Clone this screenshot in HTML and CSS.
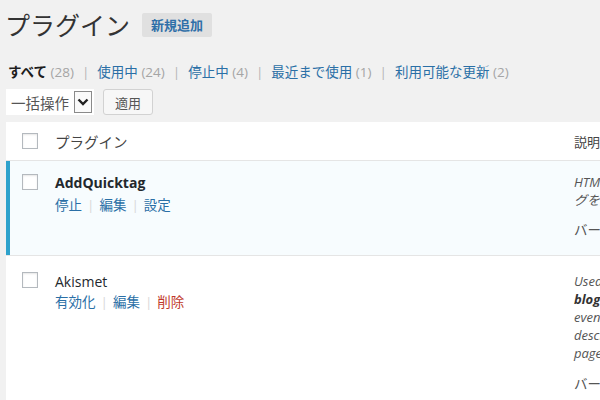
FILE: index.html
```html
<!DOCTYPE html>
<html lang="ja">
<head>
    <meta charset="UTF-8">
    <meta name="viewport" content="width=device-width, initial-scale=1.0">
    <title>プラグイン</title>
    <link rel="stylesheet" href="styles.css">
</head>
<body>
    <div class="wrap">
        <div class="page-head">
            <h1>プラグイン</h1>
            <a class="add-new" href="#">新規追加</a>
        </div>

        <ul class="filters">
            <li class="current">すべて <span class="count">(28)</span></li>
            <li class="sep">|</li>
            <li><a href="#">使用中</a> <span class="count">(24)</span></li>
            <li class="sep">|</li>
            <li><a href="#">停止中</a> <span class="count">(4)</span></li>
            <li class="sep">|</li>
            <li><a href="#">最近まで使用</a> <span class="count">(1)</span></li>
            <li class="sep">|</li>
            <li><a href="#">利用可能な更新</a> <span class="count">(2)</span></li>
        </ul>

        <div class="bulk-bar">
            <div class="bulk-select">
                <span>一括操作</span>
                <span class="arrow">
                    <svg width="12" height="8" viewBox="0 0 12 8"><path d="M1.5 1.5 L6 6 L10.5 1.5" fill="none" stroke="#222" stroke-width="2.4"/></svg>
                </span>
            </div>
            <button class="apply">適用</button>
        </div>

        <div class="plugins">
            <div class="row head">
                <div class="cb"><span class="box"></span></div>
                <div class="name-col">プラグイン</div>
                <div class="desc-col">説明</div>
            </div>

            <div class="row active">
                <div class="cb"><span class="box"></span></div>
                <div class="name-col">
                    <div class="title">AddQuicktag</div>
                    <div class="actions">
                        <a href="#">停止</a><span class="sep">|</span><a href="#">編集</a><span class="sep">|</span><a href="#">設定</a>
                    </div>
                </div>
                <div class="desc-col">
                    <div class="desc">
                        <p>HTML エディタとビジュアルエディタにクイックタ</p>
                        <p>グを追加して、よく使うタグを簡単に挿入できます。</p>
                    </div>
                    <div class="version">バージョン 2.4.1 | 作者: Frank Bültge | 詳細を表示</div>
                </div>
            </div>

            <div class="row inactive">
                <div class="cb"><span class="box"></span></div>
                <div class="name-col">
                    <div class="title">Akismet</div>
                    <div class="actions">
                        <a href="#">有効化</a><span class="sep">|</span><a href="#">編集</a><span class="sep">|</span><a class="delete" href="#">削除</a>
                    </div>
                </div>
                <div class="desc-col">
                    <div class="desc">
                        <p>Used by millions, Akismet is quite possibly the best way in the world to <strong>protect your</strong></p>
                        <p><strong>blog from spam</strong>. It keeps your site protected</p>
                        <p>even while you sleep. To get started: 1) Click the "Activate" link to the left of this</p>
                        <p>description, 2) Sign up for an Akismet plan to get an API key, and 3) Go to your Akismet configuration</p>
                        <p>page, and save your API key.</p>
                    </div>
                    <div class="version">バージョン 3.1.5 | 作者: Automattic | 詳細を表示</div>
                </div>
            </div>
        </div>
    </div>
</body>
</html>
```

FILE: styles.css
```css
body { margin: 0; background-color: #f1f1f1; font-family: "Open Sans", "Noto Sans CJK JP", sans-serif; color: #32373c; overflow: hidden; }
a { color: #2a6fa6; text-decoration: none; }
.wrap { padding-left: 6px; width: 1000px; }

.page-head { display: flex; align-items: center; padding-top: 10px; }
.page-head h1 { margin: 0 0 0 -1px; font-size: 25px; font-weight: 400; line-height: 30px; color: #333; }
.add-new { margin-left: 12px; height: 24px; line-height: 24px; padding: 0 9px; background-color: #e0e0e0; font-size: 13px; font-weight: 700; color: #2f6fa8; border-radius: 2px; }

.filters { list-style: none; display: flex; margin: 22px 0 0 2px; padding: 0; font-size: 13.5px; line-height: 20px; }
.filters li { white-space: nowrap; }
.filters .current { color: #1d1d1d; font-weight: 700; }
.filters .count { color: #a5a5a5; font-weight: 400; font-size: 13.5px; }
.filters .sep { color: #b5b5b5; margin: 0 8px; }

.bulk-bar { display: flex; align-items: center; margin-top: 7px; height: 26px; }
.bulk-select { display: flex; align-items: center; justify-content: space-between; width: 88px; height: 26px; padding: 0 2px 0 5px; box-sizing: border-box; background-color: #fff; font-size: 14.5px; color: #555; }
.bulk-select .arrow { display: flex; align-items: center; justify-content: center; width: 16px; height: 20px; border: 1px solid #8a8a8a; background-color: #fafafa; }
.apply { margin-left: 9px; height: 26px; width: 50px; padding: 0; background-color: #f7f7f7; border: 1px solid #d2d2d2; border-radius: 3px; font-family: "Open Sans", "Noto Sans CJK JP", sans-serif; font-size: 13px; color: #555; }

.plugins { margin-top: 7px; background-color: #fff; width: 994px; }
.row { display: grid; grid-template-columns: 49px 519px 1fr; border-bottom: 1px solid #e5e5e5; }
.row .cb { padding-left: 16px; }
.box { display: block; width: 16px; height: 16px; box-sizing: border-box; border: 1px solid #b4b9be; background-color: #fff; box-shadow: inset 0 1px 2px rgba(0, 0, 0, 0.1); }

.row.head { height: 38px; align-items: center; font-size: 14.5px; color: #444; }

.row.active { background-color: #f7fcfe; box-shadow: inset 4px 0 0 #2ea2cc; min-height: 95px; padding-top: 12px; box-sizing: border-box; }
.row.active .box { margin-top: 1px; }
.row.inactive { padding-top: 16px; min-height: 150px; box-sizing: border-box; }

.title { font-size: 14px; line-height: 20px; font-weight: 700; color: #23282d; }
.inactive .title { font-weight: 400; }
.actions { font-size: 13.5px; line-height: 20px; }
.active .actions { margin-top: 2px; }
.actions .sep { color: #d8d8d8; margin: 0 5px; }
.actions .delete { color: #c0392b; }

.desc-col { font-size: 13px; white-space: nowrap; }
.desc p { margin: 0; line-height: 18px; font-style: italic; color: #555; }
.desc strong { color: #333; }
.version { line-height: 18px; margin-top: 12px; font-size: 13.5px; color: #555; }
.inactive .version { margin-top: 13px; }
```
